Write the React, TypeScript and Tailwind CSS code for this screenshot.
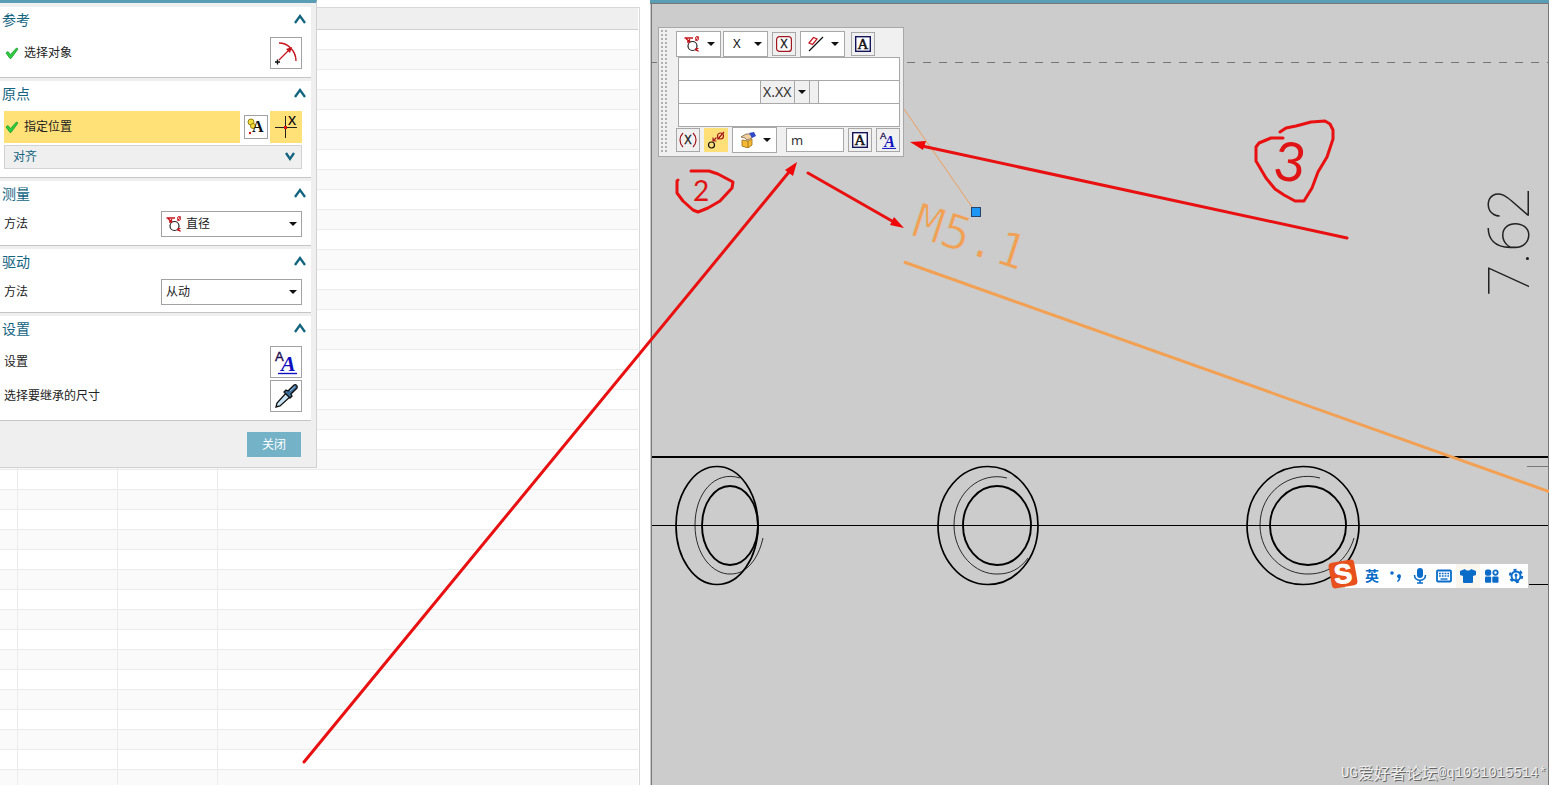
import type { ReactNode } from "react";

const fontStack = "font-['Noto_Sans','Noto_Sans_CJK_SC',sans-serif]";

const iconButton = "flex items-center justify-center shrink-0";

const holes = [
    { cx: 717, rx: 41, innerCx: 730, innerRx: 28, arc: "M740 478 C715 470 695 493 695 525 C695 555 713 575 731 574 C746 574 758 560 763 538" },
    { cx: 988, rx: 50, innerCx: 997, innerRx: 34, arc: "M1007 478 C980 471 954 493 954 525 C954 553 975 575 998 574 C1010 574 1020 569 1028 558" },
    { cx: 1303, rx: 56, innerCx: 1308, innerRx: 38, arc: "M1320 478 C1290 470 1260 492 1260 525 C1260 554 1284 575 1309 574 C1330 574 1348 559 1354 538" },
];

function DiameterIcon() {
    return (
        <svg viewBox="0 0 16 16" className="w-4 h-4" fill="none" aria-hidden="true">
            <circle cx="8.500" cy="10" r="4.500" stroke="#222" strokeWidth="1.200" />
            <path d="M0.500 2 H9 M2 2.500 L5.500 6 M5.500 3 V6 H3" stroke="#c4141c" strokeWidth="1.300" />
            <path d="M12 13 L14.500 15.500 M12 15 V12.500 H14.500" stroke="#c4141c" strokeWidth="1.200" />
            <ellipse cx="13" cy="2.500" rx="1.500" ry="2" stroke="#c4141c" />
            <path d="M11.500 5 L14.500 0.500" stroke="#c4141c" />
        </svg>
    );
}

function RadiusIcon() {
    return (
        <svg viewBox="0 0 30 30" className="w-[30px] h-[30px]" fill="none" aria-hidden="true">
            <path d="M8 5 C17 5 25 13 25 23" stroke="#c4141c" strokeWidth="1.400" />
            <path d="M8 22 L19 11" stroke="#c4141c" strokeWidth="1.200" />
            <path d="M21 9 L15 11 L19 15 Z" fill="#c4141c" />
            <path d="M4 24 H9 M6.500 21.500 V26.500" stroke="#111" strokeWidth="1.400" />
        </svg>
    );
}

function CheckIcon() {
    return (
        <svg viewBox="0 0 14 12" className="w-[14px] h-3 shrink-0" aria-hidden="true">
            <path d="M1 6 L3 4.500 L5.500 7.500 L11.500 1 L13 2 L6 11.500 L5 11.500 Z" fill="#2ecc40" stroke="#169b2b" strokeWidth="0.800" />
        </svg>
    );
}

function Chevron({ down = false }: { down?: boolean }) {
    return (
        <svg viewBox="0 0 12 10" className="w-3 h-[10px]" fill="none" aria-hidden="true">
            <path d={down ? "M2 1 L6 7 L10 1" : "M1 9 L6 2 L11 9"} stroke="#12647f" strokeWidth="2.300" />
        </svg>
    );
}

function Caret() {
    return (
        <svg viewBox="0 0 8 4" className="w-2 h-1" aria-hidden="true">
            <path d="M0 0 H8 L4 4 Z" fill="#111" />
        </svg>
    );
}

function AnnotationIcon() {
    return (
        <svg viewBox="0 0 22 22" className="w-[22px] h-[22px]" aria-hidden="true">
            <circle cx="6" cy="6" r="3" fill="#f5dd3c" stroke="#94800c" />
            <circle cx="8" cy="10" r="2.500" fill="#f5dd3c" stroke="#94800c" />
            <circle cx="5" cy="17" r="1.200" fill="#d01010" />
            <text x="7" y="16" fontFamily="Liberation Serif, serif" fontWeight="700" fontSize="16" fill="#111">A</text>
        </svg>
    );
}

function OriginIcon() {
    return (
        <svg viewBox="0 0 32 32" className="w-8 h-8" aria-hidden="true">
            <path d="M5 16.500 H27 M15.500 5 V27" stroke="#222" />
            <rect x="14" y="15" width="3" height="3" fill="#e01010" />
            <text x="18" y="14" fontFamily="Open Sans, sans-serif" fontWeight="600" fontSize="13" fill="#111">X</text>
        </svg>
    );
}

function TextStyleIcon({ className }: { className: string }) {
    return (
        <svg viewBox="0 0 30 30" className={className} aria-hidden="true">
            <text x="4" y="14" fontFamily="Liberation Sans, sans-serif" fontSize="13" fill="#1a0d50" stroke="#1a0d50" strokeWidth="0.400">A</text>
            <text x="10" y="24" fontFamily="Liberation Serif, serif" fontStyle="italic" fontWeight="700" fontSize="22" fill="#1010c0">A</text>
            <path d="M7 26.500 H26" stroke="#1010c0" strokeWidth="1.400" />
        </svg>
    );
}

function DropperIcon() {
    return (
        <svg viewBox="0 0 30 30" className="w-[30px] h-[30px]" aria-hidden="true">
            <path d="M5 26 L6 22 L16 11 L20 15 L9 25 Z" fill="#c9e4f4" stroke="#111" strokeWidth="1.300" />
            <path d="M17 10 L23 4 C25 3 27 5 26 7 L20 13 L21 15 L19 17 L13 11 L15 9 Z" fill="#3d6d9c" stroke="#111" strokeWidth="1.300" />
            <path d="M19 10 L24 5.500" stroke="#a5cbe8" />
        </svg>
    );
}

function BoxedAIcon() {
    return (
        <svg viewBox="0 0 16 16" className="w-4 h-4" aria-hidden="true">
            <rect x="0.700" y="0.700" width="14.600" height="14.600" fill="#fff" stroke="#14145a" strokeWidth="1.400" />
            <text x="8" y="13" textAnchor="middle" fontFamily="Liberation Serif, serif" fontSize="15" fill="#111" stroke="#111" strokeWidth="0.500">A</text>
        </svg>
    );
}

function BasicDimIcon() {
    return (
        <svg viewBox="0 0 16 16" className="w-4 h-4" aria-hidden="true">
            <rect x="0.600" y="0.600" width="14.800" height="14.800" rx="3" fill="#fff" stroke="#a01820" strokeWidth="1.200" />
            <text x="8" y="12" textAnchor="middle" fontFamily="Open Sans, sans-serif" fontSize="12" fill="#111" stroke="#111" strokeWidth="0.300">X</text>
        </svg>
    );
}

function ReferenceDimIcon() {
    return (
        <svg viewBox="0 0 18 16" className="w-[18px] h-4" fill="none" aria-hidden="true">
            <path d="M4 1 C0 5 0 11 4 15 M14 1 C18 5 18 11 14 15" stroke="#a01820" strokeWidth="1.200" />
            <text x="9" y="12" textAnchor="middle" fontFamily="Open Sans, sans-serif" fontSize="12" fill="#111" stroke="#111" strokeWidth="0.300">X</text>
        </svg>
    );
}

function ToleranceIcon() {
    return (
        <svg viewBox="0 0 16 16" className="w-4 h-4" fill="none" aria-hidden="true">
            <path d="M1 7 L5.500 1.500 L9 3 L4.500 8.500 Z" stroke="#c4141c" strokeWidth="1.200" />
            <path d="M1 15 L15 1" stroke="#111" strokeWidth="1.200" />
        </svg>
    );
}

function DiameterLineIcon() {
    return (
        <svg viewBox="0 0 20 20" className="w-5 h-5" fill="none" aria-hidden="true">
            <circle cx="5.500" cy="15" r="3" stroke="#111" strokeWidth="1.200" />
            <circle cx="14.500" cy="6" r="3" stroke="#a01820" strokeWidth="1.200" />
            <path d="M11.500 9.500 L18 2 M7 11 L10.500 7.500 M7 7.500 V11 H10.500" stroke="#a01820" strokeWidth="1.200" />
        </svg>
    );
}

function EditBoxIcon() {
    return (
        <svg viewBox="0 0 16 16" className="w-4 h-4" aria-hidden="true">
            <path d="M2 8 L8 9 L12 7 V13 L8 16 L2 14 Z" fill="#f4b935" stroke="#9a6a10" strokeWidth="0.800" />
            <path d="M8 9 V16" stroke="#9a6a10" strokeWidth="0.800" />
            <path d="M1 5 L6 2 L11 2 L12 6 L7 8 L5 6 Z" fill="#f0cfa0" stroke="#7d6240" strokeWidth="0.800" />
            <path d="M9 1 L14 0 L16 4 L12 6 Z" fill="#2c49c8" />
        </svg>
    );
}

function Section({ title, className = "pb-2", children }: { title: string; className?: string; children: ReactNode }) {
    return (
        <section className={`bg-white border-b border-[#c6c6c6] pr-[9px] ${className}`}>
            <button className="flex w-full h-[30px] items-start pt-[3px] pl-[2px] justify-between text-left">
                <span className="text-sm leading-5 text-[#12647f]">{title}</span>
                <span className="pt-1 -mr-1"><Chevron /></span>
            </button>
            <div className="pl-1 flex flex-col gap-[2px]">{children}</div>
        </section>
    );
}

function MethodField({ id, value, icon }: { id: string; value: string; icon?: ReactNode }) {
    return (
        <div className="flex items-center justify-between">
            <label htmlFor={id}>方法</label>
            <div className="relative w-[141px]">
                <select id={id} className={`w-full h-[26px] appearance-none rounded-none border border-[#a2a2a2] bg-white text-[#222] ${icon ? "pl-6" : "pl-1"}`}>
                    <option>{value}</option>
                </select>
                {icon && <span className="absolute left-[5px] top-[5px] pointer-events-none">{icon}</span>}
                <span className="absolute right-[5px] top-[11px] pointer-events-none"><Caret /></span>
            </div>
        </div>
    );
}

function DimensionDialog() {
    return (
        <div className="absolute left-0 top-0 w-[317px] bg-[#efefef] border-t-[3px] border-t-[#5a9eb5] border-r border-r-[#d2d2d2] border-b border-b-[#d2d2d2] text-xs text-[#222]">
            <div className="flex flex-col gap-[3px] pt-1 pr-[5px]">
                <Section title="参考">
                    <div className="flex items-center justify-between">
                        <span className="flex items-center gap-[5px] pl-px"><CheckIcon />选择对象</span>
                        <button aria-label="选择对象" className={`${iconButton} w-8 h-8 border border-[#a2a2a2]`}><RadiusIcon /></button>
                    </div>
                </Section>
                <Section title="原点">
                    <div className="flex items-center">
                        <button className="flex flex-1 h-8 items-center gap-[5px] pl-px mr-1 bg-[#ffe178]"><CheckIcon />指定位置</button>
                        <button aria-label="注释原点" className={`${iconButton} w-6 h-6 mr-[2px] border border-[#a2a2a2]`}><AnnotationIcon /></button>
                        <button aria-label="原点" className={`${iconButton} w-8 h-8 bg-[#ffe178]`}><OriginIcon /></button>
                    </div>
                    <button className="flex w-full h-6 items-center justify-between border border-[#d2d2d2] bg-[#efefef] pl-2 pr-[5px] text-[#12647f]">
                        对齐
                        <Chevron down />
                    </button>
                </Section>
                <Section title="测量">
                    <MethodField id="measure-method" value="直径" icon={<DiameterIcon />} />
                </Section>
                <Section title="驱动" className="pb-[7px]">
                    <MethodField id="drive-method" value="从动" />
                </Section>
                <Section title="设置">
                    <div className="flex items-center justify-between">
                        <span>设置</span>
                        <button aria-label="设置" className={`${iconButton} w-8 h-8 border border-[#a2a2a2]`}><TextStyleIcon className="w-[30px] h-[30px]" /></button>
                    </div>
                    <div className="flex items-center justify-between">
                        <span>选择要继承的尺寸</span>
                        <button aria-label="选择要继承的尺寸" className={`${iconButton} w-8 h-8 border border-[#a2a2a2]`}><DropperIcon /></button>
                    </div>
                </Section>
            </div>
            <div className="flex justify-end pt-[11px] pb-[10px] pr-[15px]">
                <button className="w-[54px] h-[25px] bg-[#74b2c8] text-white">关闭</button>
            </div>
        </div>
    );
}

function PartsTable() {
    return (
        <div className="mt-[7px] mr-[10px] pr-px border-t border-r border-[#d8d8d8]">
            <table className="w-full table-fixed border-collapse">
                <colgroup>
                    <col className="w-[17px]" />
                    <col className="w-[100px]" />
                    <col className="w-[100px]" />
                    <col />
                </colgroup>
                <thead>
                    <tr className="h-[21px] border-b border-[#d0d0d0] bg-[#efefef]">
                        <th /><th /><th /><th />
                    </tr>
                </thead>
                <tbody>
                    {Array.from({ length: 38 }, (_, i) => (
                        <tr key={i} className="h-5 border-b border-[#ebebeb] even:bg-[#fafafa]">
                            <td className="border-r border-[#ebebeb]" />
                            <td className="border-r border-[#ebebeb]" />
                            <td className="border-r border-[#ebebeb]" />
                            <td />
                        </tr>
                    ))}
                </tbody>
            </table>
        </div>
    );
}

const comboButton = "flex items-center justify-between shrink-0 h-[26px] w-[45px] border border-[#a8a8a8] bg-white pl-[7px] pr-[5px]";
const smallButton = "flex items-center justify-center shrink-0 w-6 h-6 border border-[#a8a8a8]";
const field = "h-6 min-w-0 border border-[#a8a8a8] bg-white px-1 rounded-none outline-none";

function FloatingToolbar() {
    return (
        <div className="absolute left-[8px] top-[27px] flex w-[246px] h-[130px] border border-[#a8a8a8] bg-[#f0f0f0] text-[13px] text-[#333]">
            <svg className="w-[17px] h-full shrink-0" aria-hidden="true">
                <defs>
                    <pattern id="grip" x="2" y="2" width="4" height="4" patternUnits="userSpaceOnUse">
                        <rect width="2" height="2" fill="#b0b0b0" />
                    </pattern>
                </defs>
                <rect x="2" y="2" width="6" height="122" fill="url(#grip)" />
            </svg>
            <div className="flex min-w-0 flex-1 flex-col pr-[3px] pt-[3px]">
                <div className="flex items-center h-[26px]">
                    <button aria-label="直径" className={`${comboButton} mr-[2px]`}><DiameterIcon /><Caret /></button>
                    <button className={comboButton}><span className="pl-[2px] text-[#111]">X</span><Caret /></button>
                    <button aria-label="基本尺寸" className={`${smallButton} mx-1`}><BasicDimIcon /></button>
                    <button aria-label="公差" className={comboButton}><ToleranceIcon /><Caret /></button>
                    <button aria-label="文本" className={`${smallButton} ml-[6px]`}><BoxedAIcon /></button>
                </div>
                <div className="flex flex-col pl-[2px] -space-y-px">
                    <input aria-label="前缀上" className={`${field} w-full`} />
                    <div className="flex items-center">
                        <input aria-label="前缀" className={`${field} w-[83px]`} />
                        <span className="w-[33px] pl-[2px] text-sm leading-5">X.XX</span>
                        <button aria-label="精度" className="flex w-4 h-6 items-center justify-center border border-[#a8a8a8]"><Caret /></button>
                        <input aria-label="后缀" className={`${field} ml-2 flex-1`} />
                    </div>
                    <input aria-label="后缀下" className={`${field} w-full`} />
                </div>
                <div className="flex items-center h-[26px]">
                    <button aria-label="参考尺寸" className={smallButton}><ReferenceDimIcon /></button>
                    <button aria-label="直径符号" className="flex items-center justify-center shrink-0 w-6 h-6 mx-1 bg-[#ffdf78]"><DiameterLineIcon /></button>
                    <button aria-label="编辑" className={comboButton}><EditBoxIcon /><Caret /></button>
                    <input aria-label="值" defaultValue="m" className={`${field} w-[58px] ml-auto mr-1`} />
                    <button aria-label="文本编辑" className={`${smallButton} mr-1`}><BoxedAIcon /></button>
                    <button aria-label="文本设置" className={smallButton}><TextStyleIcon className="w-[22px] h-[22px]" /></button>
                </div>
            </div>
        </div>
    );
}

function Drawing() {
    return (
        <svg viewBox="650 0 899 785" preserveAspectRatio="xMinYMin slice" className="block w-full h-full" fill="none" aria-hidden="true">
            <path d="M649 3.500 H1549 M651.500 3 V785 M1548.500 3 V785" stroke="#777" />
            <path d="M651 62.500 H657" stroke="#777" />
            <path d="M907 62.500 H1548" stroke="#777" strokeDasharray="8 8" />
            <path d="M652 457 H1548" stroke="#000" strokeWidth="2" />
            <path d="M652 525.500 H1548" stroke="#000" />
            <path d="M1527 466.500 H1548" stroke="#777" />
            <path d="M1529 584.500 H1548" stroke="#000" />
            {holes.map((h) => (
                <g key={h.cx} stroke="#000">
                    <ellipse cx={h.cx} cy="525.500" rx={h.rx} ry="59" strokeWidth="1.700" />
                    <ellipse cx={h.innerCx} cy="525.500" rx={h.innerRx} ry="39.500" strokeWidth="1.900" />
                    <path d={h.arc} strokeWidth="0.800" />
                </g>
            ))}
            <path d="M904 109 L972 207" stroke="#ee9f5c" />
            <path d="M904 262 L1549 491.500" stroke="#f2a154" strokeWidth="3" />
            <text transform="translate(910 235) rotate(18)" fontFamily="DejaVu Sans Mono, monospace" fontSize="48" fill="#f2a154" stroke="#ccc">M5.1</text>
            <rect x="971.500" y="207.500" width="9" height="9" fill="#1e96f5" stroke="#24466b" />
            <text transform="translate(1529 296) rotate(-90)" fontFamily="Roboto, Lato, sans-serif" fontWeight="100" fontSize="58" fill="#222">7.62</text>
        </svg>
    );
}

const imeItem = "flex items-center justify-center w-6 h-6";

function ImeBar() {
    return (
        <div className="absolute left-[695px] top-[564px] flex pl-[15px] h-6 bg-white text-[#0a6cc8]">
            <svg viewBox="0 0 32 32" className="absolute -left-[18px] -top-[6px] w-8 h-8" aria-hidden="true">
                <rect x="3" y="3" width="26" height="26" rx="4" fill="#e8511c" transform="rotate(-10 16 16)" />
                <text x="16" y="25" textAnchor="middle" fontFamily="Liberation Sans, sans-serif" fontWeight="700" fontSize="27" fill="#fff" stroke="#fff" transform="rotate(-6 16 16)">S</text>
            </svg>
            <button className={`${imeItem} text-sm font-bold`}>英</button>
            <button aria-label="标点" className={imeItem}>
                <svg viewBox="0 0 16 16" className="w-4 h-4" fill="currentColor" aria-hidden="true">
                    <circle cx="4" cy="5" r="1.800" />
                    <path d="M9 8 A2 2 0 1 1 12.500 9.500 C12.500 12 11 13.500 9.500 14 L9 13 C10.500 12 10.500 11 10.500 10 C9.500 10 9 9 9 8 Z" />
                </svg>
            </button>
            <button aria-label="语音" className={imeItem}>
                <svg viewBox="0 0 16 16" className="w-4 h-4" fill="none" stroke="currentColor" strokeWidth="1.600" aria-hidden="true">
                    <rect x="5" y="0" width="6" height="10" rx="3" fill="currentColor" stroke="none" />
                    <path d="M2.500 7 C2.500 14 13.500 14 13.500 7 M8 12 V15 M5 15 H11" />
                </svg>
            </button>
            <button aria-label="键盘" className={imeItem}>
                <svg viewBox="0 0 16 16" className="w-4 h-4" fill="none" stroke="currentColor" aria-hidden="true">
                    <rect x="1" y="2.500" width="14" height="11" rx="1" strokeWidth="1.800" />
                    <path d="M3 5.500 H13 M3 8 H13" strokeWidth="1.600" strokeDasharray="1.800 1" />
                    <path d="M4.500 11 H11.500" strokeWidth="1.400" />
                </svg>
            </button>
            <button aria-label="皮肤" className={`${imeItem} bg-[#f8f6ee]`}>
                <svg viewBox="0 0 16 16" className="w-4 h-4" fill="currentColor" aria-hidden="true">
                    <path d="M5 1 C6 3 10 3 11 1 L16 3 V7 L13 8 V14 Q13 15 12 15 H4 Q3 15 3 14 V8 L0 7 V3 Z" />
                </svg>
            </button>
            <button aria-label="工具" className={imeItem}>
                <svg viewBox="0 0 16 16" className="w-4 h-4" fill="currentColor" aria-hidden="true">
                    <rect x="1" y="1.500" width="6.200" height="6.200" rx="2" />
                    <rect x="1" y="8.500" width="6.200" height="6.200" rx="1" />
                    <rect x="8.300" y="8.500" width="6.200" height="6.200" rx="1" />
                    <circle cx="11.500" cy="4.600" r="2.200" fill="none" stroke="currentColor" strokeWidth="1.800" />
                </svg>
            </button>
            <button aria-label="设置" className={imeItem}>
                <svg viewBox="0 0 16 16" className="w-4 h-4" fill="none" stroke="currentColor" strokeWidth="1.500" aria-hidden="true">
                    <circle cx="8" cy="8" r="4.500" strokeWidth="2" />
                    <circle cx="8" cy="8" r="6.200" strokeWidth="2" strokeDasharray="3 3.500" />
                    <path d="M8 7 V14" />
                    <circle cx="8" cy="7" r="1.500" fill="currentColor" stroke="none" />
                </svg>
            </button>
        </div>
    );
}

// Red marker notes drawn over both panes
function Markup() {
    return (
        <svg viewBox="0 0 1549 785" preserveAspectRatio="xMinYMin slice" className="absolute inset-0 w-full h-full pointer-events-none" fill="none" aria-hidden="true">
            <g stroke="#e81010" strokeWidth="3" strokeLinecap="round" strokeLinejoin="round">
                <path d="M304 762 L789 172" />
                <path d="M808 173 L892 221" />
                <path d="M1347 238 L922 146" />
                <path d="M691 171 L709 171 L718 174 L733 182 L732 188 L720 201 L708 208 L698 212 L693 210 L683 201 L677 193 L677 181 L678 180" />
                <path d="M1283 138 L1271 138 L1259 143 L1256 147 L1256 161 L1266 178 L1275 189 L1284 195 L1295 201 L1304 201 L1312 188 L1318 172 L1327 157 L1333 139 L1333 130 L1330 124 L1325 121 L1311 122 L1296 126 L1286 128 L1280 132" />
            </g>
            <g fill="#f00606">
                <path d="M797 162 L793 176 L785 170 Z" />
                <path d="M904 228 L890 225 L894 217 Z" />
                <path d="M910 142 L926 141 L923 150 Z" />
            </g>
            <g fill="#e01414" fontFamily="Lato, sans-serif" textAnchor="middle">
                <text x="701" y="201" fontSize="28">2</text>
                <text x="1290" y="181" fontSize="54" transform="rotate(8 1290 162)">3</text>
            </g>
        </svg>
    );
}

export default function App() {
    return (
        <div className={`relative flex h-screen w-full overflow-hidden bg-white ${fontStack}`}>
            <div className="relative w-[650px] shrink-0 overflow-hidden">
                <PartsTable />
                <DimensionDialog />
            </div>
            <main className="relative min-w-0 flex-1 overflow-hidden border-t-[3px] border-[#5a9eb5] bg-[#ccc]">
                <div className="absolute inset-x-0 -top-[3px] h-screen">
                    <Drawing />
                    <FloatingToolbar />
                    <ImeBar />
                    <p className="absolute right-[2px] bottom-[2px] flex items-center text-base leading-5 text-[#eee] [text-shadow:1px_1px_0_#666]">
                        <span className="font-['Liberation_Mono',monospace] text-sm">UG</span>
                        <span>爱好者论坛</span>
                        <span className="font-['Liberation_Mono',monospace] text-sm">@q1031015514*</span>
                    </p>
                </div>
            </main>
            <Markup />
        </div>
    );
}
